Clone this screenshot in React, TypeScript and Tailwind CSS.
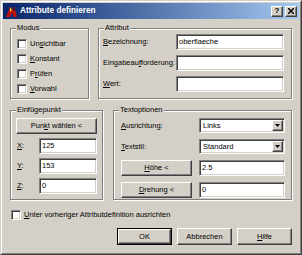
import React, { ReactNode } from 'react';

const raised =
  'border border-t-white border-l-white border-b-[#404040] border-r-[#404040] shadow-[inset_-1px_-1px_0_#808080] bg-[#d4d0c8]';
const sunken =
  'border border-t-[#808080] border-l-[#808080] border-b-white border-r-white shadow-[inset_1px_1px_0_#404040,inset_-1px_-1px_0_#d4d0c8]';

function Group({ title, className, children }: { title: ReactNode; className: string; children?: ReactNode }) {
  return (
    <div
      className={`relative border border-[#808080] shadow-[1px_1px_0_white,inset_1px_1px_0_white] ${className}`}
    >
      <span className="absolute -top-[6px] left-[5px] bg-[#d4d0c8] px-[1px] leading-[10px]">{title}</span>
      {children}
    </div>
  );
}

function Check({ label }: { label: ReactNode }) {
  return (
    <div className="flex items-center h-[10px] gap-[3px]">
      <span className={`w-[10px] h-[10px] bg-white ${sunken}`} />
      <span>{label}</span>
    </div>
  );
}

function Field({ value, className = '' }: { value?: string; className?: string }) {
  return (
    <div className={`h-[16px] bg-white ${sunken} pl-[2px] flex items-center ${className}`}>{value}</div>
  );
}

function Btn({ children, className = '' }: { children: ReactNode; className?: string }) {
  return <div className={`flex items-center justify-center ${raised} ${className}`}>{children}</div>;
}

function Select({ value }: { value: string }) {
  return (
    <div className={`w-[86px] h-[15px] bg-white ${sunken} flex items-center p-[1px]`}>
      <span className="flex-1 pl-[2px]">{value}</span>
      <span className={`w-[11px] h-[11px] flex items-center justify-center ${raised}`}>
        <svg width="5" height="3" viewBox="0 0 5 3">
          <path d="M0 0h5L2.5 3z" fill="black" />
        </svg>
      </span>
    </div>
  );
}

const U = ({ children }: { children: ReactNode }) => <span className="underline underline-offset-1">{children}</span>;

export default function App() {
  return (
    <div
      className="w-[302px] h-[255px] bg-[#d4d0c8] text-black text-[7.5px] leading-[10px] border border-t-[#d4d0c8] border-l-[#d4d0c8] border-b-[#404040] border-r-[#404040]"
      style={{ fontFamily: '"Liberation Sans", Arial, sans-serif' }}
    >
      <div className="h-full border border-t-white border-l-white border-b-[#808080] border-r-[#808080] p-[1px] flex flex-col">
        {/* title bar */}
        <div className="h-[16px] flex items-center bg-gradient-to-r from-[#0a246a] to-[#a6caf0] pl-[2px] pr-[2px]">
          <svg width="13" height="13" viewBox="0 0 13 13">
            <path d="M1 12L5 2l2 3 2-4 3 11H9L7 8l-2 4z" fill="#c01010" />
            <path d="M5 2l2 3-2 2z" fill="#f0d020" />
            <path d="M9 1l1 4-2 1z" fill="#202020" />
          </svg>
          <span className="ml-[2px] text-white font-bold text-[8.2px]">Attribute definieren</span>
          <div className="ml-auto flex items-center">
            <Btn className="w-[12px] h-[11px] font-bold text-[8px] leading-none">?</Btn>
            <Btn className="ml-[2px] w-[12px] h-[11px]">
              <svg width="6" height="6" viewBox="0 0 6 6">
                <path d="M0 0L6 6M6 0L0 6" stroke="black" strokeWidth="1.5" />
              </svg>
            </Btn>
          </div>
        </div>

        <div className="pl-[7px]">
          {/* row 1 */}
          <div className="flex gap-[9px] mt-[9px]">
            <Group title="Modus" className="w-[79px] h-[71px]">
              <div className="flex flex-col gap-[5px] pt-[10px] pl-[6px]">
                <Check label={<>Un<U>s</U>ichtbar</>} />
                <Check label={<><U>K</U>onstant</>} />
                <Check label={<>P<U>r</U>üfen</>} />
                <Check label={<><U>V</U>orwahl</>} />
              </div>
            </Group>
            <Group title="Attribut" className="w-[194px] h-[71px]">
              <div className="grid grid-cols-[73px_108px] gap-y-[5px] pt-[5px] pl-[4px] items-center">
                <span><U>B</U>ezeichnung:</span>
                <Field value="oberflaeche" />
                <span>Eingabeau<U>f</U>forderung:</span>
                <Field />
                <span><U>W</U>ert:</span>
                <Field />
              </div>
            </Group>
          </div>

          {/* row 2 */}
          <div className="flex gap-[10px] mt-[11px]">
            <Group title={<>Einfügepunkt</>} className="w-[93px] h-[90px]">
              <div className="pl-[5px] pt-[7px] pr-[4px] flex flex-col gap-[4px]">
                <Btn className="h-[16px] w-[81px]">Pun<U>k</U>t wählen &lt;</Btn>
                <div className="grid grid-cols-[22px_58px] gap-y-[4px] items-center pl-[1px]">
                  <span><U>X</U>:</span>
                  <Field value="125" />
                  <span><U>Y</U>:</span>
                  <Field value="153" />
                  <span><U>Z</U>:</span>
                  <Field value="0" />
                </div>
              </div>
            </Group>
            <Group title="Textoptionen" className="w-[179px] h-[90px]">
              <div className="grid grid-cols-[78px_86px] gap-y-[6px] items-center pt-[7px] pl-[7px]">
                <span><U>A</U>usrichtung:</span>
                <Select value="Links" />
                <span><U>T</U>extstil:</span>
                <Select value="Standard" />
                <Btn className="h-[16px] w-[71px]"><U>H</U>öhe &lt;</Btn>
                <Field value="2.5" />
                <Btn className="h-[16px] w-[71px]"><U>D</U>rehung &lt;</Btn>
                <Field value="0" />
              </div>
            </Group>
          </div>

          {/* align checkbox */}
          <div className="mt-[10px] pl-[1px]">
            <Check label={<><U>U</U>nter vorheriger Attributdefinition ausrichten</>} />
          </div>

          {/* buttons */}
          <div className="flex gap-[5px] mt-[8px] pl-[107px]">
            <div className="w-[55px] h-[17px] border border-black">
              <Btn className="w-full h-full">OK</Btn>
            </div>
            <Btn className="w-[55px] h-[17px]">Abbrechen</Btn>
            <Btn className="w-[55px] h-[17px]"><U>H</U>ilfe</Btn>
          </div>
        </div>
      </div>
    </div>
  );
}
